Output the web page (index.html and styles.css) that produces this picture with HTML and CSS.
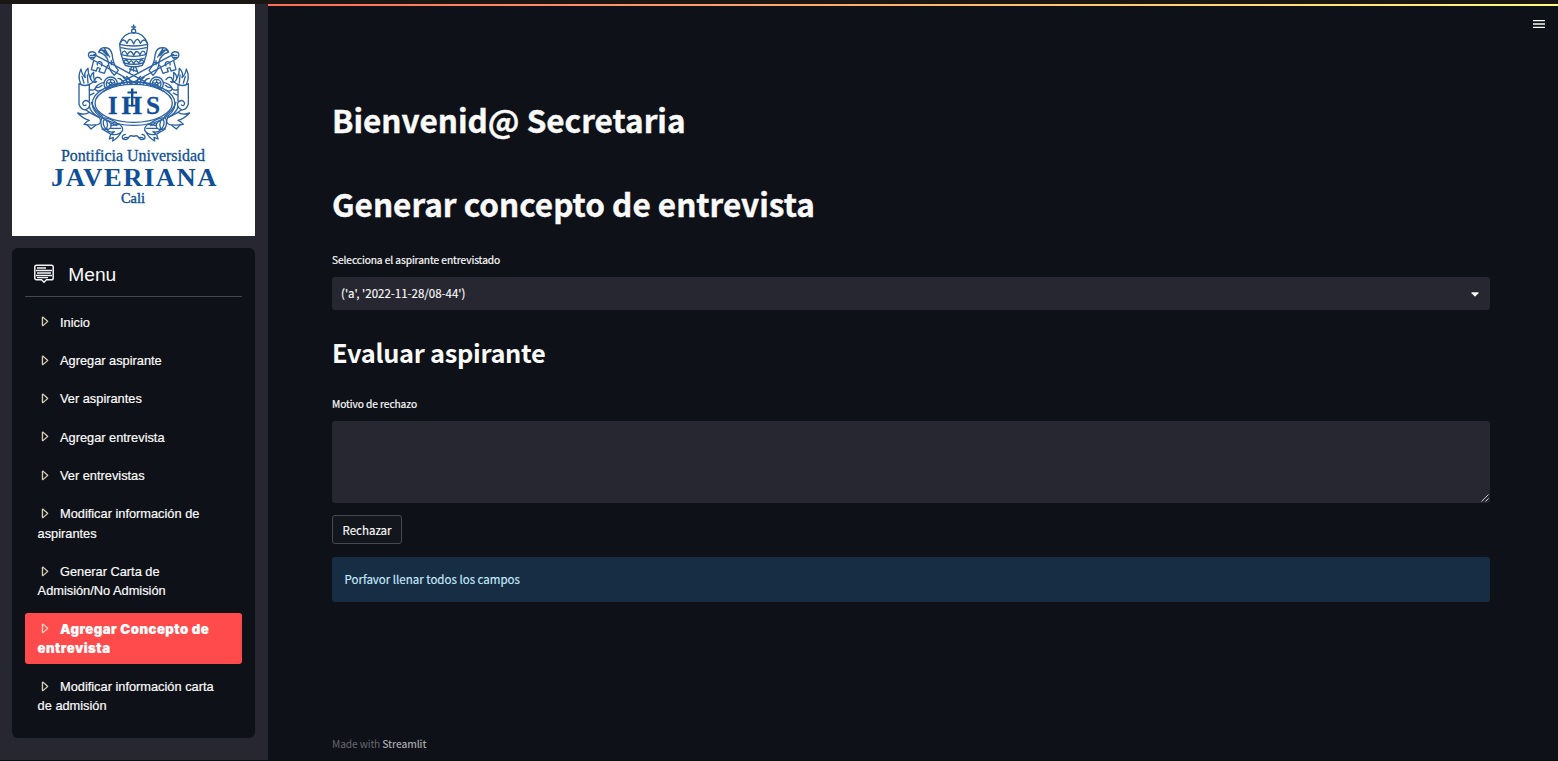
FILE: index.html
```html
<!DOCTYPE html>
<html lang="es">
<head>
<meta charset="utf-8">
<title>Generar concepto de entrevista</title>
<link rel="stylesheet" href="styles.css">
</head>
<body>
<svg class="defs" width="0" height="0">
  <symbol id="caret" viewBox="0 0 16 16"><path fill="currentColor" stroke="currentColor" stroke-width=".5" d="M6 12.796V3.204L11.481 8 6 12.796zm.659.753 5.48-4.796a1 1 0 0 0 0-1.506L6.66 2.451C6.011 1.885 5 2.345 5 3.204v9.592a1 1 0 0 0 1.659.753z"/></symbol>
</svg>
<div class="app">
  <aside class="sidebar">
    <div class="logo">
      <svg width="243" height="232" viewBox="0 0 243 232">
        <g transform="translate(48 11) scale(.33333)" fill="none" stroke="#2a62a3" stroke-width="4" stroke-linejoin="round" stroke-linecap="round">
          <!-- ribbons and flames, drawn once and mirrored -->
          <g id="side">
            <path d="M62 206 Q52 185 63 162 Q66 180 76 188 Q70 174 84 160 Q83 176 92 192 Q91 180 101 172 Q99 190 107 202"/>
            <path d="M57 206 V268 Q64 287 78 284 Q94 276 88 262 Q76 250 68 264 Q70 276 78 270 M57 206 Q72 216 88 208 V258"/>
            <path d="M88 208 Q102 202 108 188 Q118 184 124 194 M92 192 Q98 206 110 200 M66 184 L72 204 M82 180 L84 204"/>
            <path d="M53 294 Q75 302 88 292 Q103 300 119 308 Q127 324 113 329 Q92 332 72 328 Q80 318 88 316 Q70 312 53 294"/>
            <path d="M88 274 Q92 294 119 308 M94 262 Q103 288 128 304 M77 284 L88 292 M88 224 Q98 228 106 222 M90 240 Q96 238 102 234"/>
            <path d="M80 328 L93 342 L107 331 M128 308 Q150 309 170 324 Q190 332 188 346 Q178 362 154 358 L163 350 Q146 354 140 344 Q128 344 124 334 Q120 310 128 308"/>
            <path d="M132 314 Q152 318 154 332 Q150 348 136 340 Q126 326 132 314 M140 318 Q145 329 140 340 M152 332 L178 328 M150 340 L182 340 M155 324 L170 332"/>
            <path d="M152 358 L148 372 L160 367 L158 378 Q176 367 182 354 M126 342 L150 356 M196 358 Q184 360 188 371 Q200 379 208 365 Q212 360 221 364 M190 371 Q198 365 206 368"/>
            <circle cx="152" cy="206" r="20"/><circle cx="152" cy="206" r="13"/><circle cx="152" cy="206" r="4"/>
            <path d="M152 194v7M141 203l7 2M163 203l-7 2M145 216l5-6M159 216l-5-6"/>
            <path d="M131 203 Q113 205 105 221 Q110 233 124 225 M108 218 Q118 219 126 211 M170 216 Q182 211 187 200 Q184 190 174 190"/>
            <path d="M181 192 Q198 201 189 221 M190 187 Q207 197 200 217 M200 184 Q216 195 208 212"/>
            <!-- keys and infulae -->
            <path d="M102 118 L255 200 M94 132 L240 212 M87 126 Q82 114 92 111 Q104 108 108 117 Q106 132 94 132 Z M91 121 L105 121 M89 127 L102 127"/>
            <path d="M101 137 L94 164 L109 168 L112 158 L121 160 L117 170 L133 175 L143 151 M112 150 Q110 139 120 140 Q130 143 124 153"/>
            <path d="M116 111 Q122 94 142 99 Q156 103 158 130 Q161 150 175 166 L163 181 Q146 165 145 141 Q142 119 116 111 M116 111 Q127 96 141 115 M125 104 L143 122 M133 100 L149 126 M149 143 H160 M154 137 V149"/>
          </g>
          <use href="#side" transform="translate(442) scale(-1 1)"/>
          <!-- oval shield -->
          <ellipse cx="221" cy="265" rx="116" ry="57" fill="#fff"/>
          <ellipse cx="221" cy="266" rx="124" ry="65"/>
          <path d="M130 229 Q221 171 312 229"/>
          <!-- tiara -->
          <path d="M179 87 Q191 53 221 53 Q251 53 263 87 Q262 123 247 151 Q221 160 196 151 Q181 123 179 87Z" fill="#fff"/>
          <path d="M179 88 Q221 98 263 88 M183 98 Q221 108 259 98 M184 119 Q221 129 257 119 M190 130 Q221 138 252 130 M192 144 Q221 152 249 144 M181 83 Q190 66 201 85 Q210 60 221 87 Q232 60 241 85 Q252 66 261 83 M185 117 Q193 99 202 119 Q212 99 221 121 Q230 99 240 119 Q249 99 257 117 M190 142 Q197 127 207 144 Q214 130 221 146 Q228 130 236 144 Q245 127 252 142"/>
          <circle cx="221" cy="48" r="6"/><path d="M221 30V43M215 36H227M216 154L208 173M226 154L234 173M221 156V168M209 162L233 170"/>
        </g>
        <g fill="#0f4f97" stroke="#0f4f97" font-family="'Liberation Serif', serif">
          <g font-weight="bold" font-size="26" stroke-width=".3">
            <text x="96" y="109.500" textLength="9.500" lengthAdjust="spacingAndGlyphs">I</text>
            <text x="109.500" y="109.500" textLength="20.500" lengthAdjust="spacingAndGlyphs">H</text>
            <text x="134" y="109.500" textLength="14" lengthAdjust="spacingAndGlyphs">S</text>
          </g>
          <path stroke="none" d="M119 84.500h2.400v3h3.700v2h-3.700v13H119v-13H115.500v-2h3.500z"/>
          <text x="49" y="157" font-size="16.500" textLength="144" lengthAdjust="spacingAndGlyphs" stroke-width=".3">Pontificia Universidad</text>
          <text x="39" y="182" font-size="25.500" font-weight="bold" textLength="167" lengthAdjust="spacingAndGlyphs" stroke="none" letter-spacing="1.500">JAVERIANA</text>
          <text x="109" y="199" font-size="14" textLength="24" lengthAdjust="spacingAndGlyphs" stroke-width=".4">Cali</text>
        </g>
      </svg>
    </div>
    <nav class="menu">
      <div class="menu-head">
        <svg width="20" height="20" viewBox="0 0 20 20" fill="none" stroke="#f3f3f8">
          <path stroke-width="1.500" d="M2.500 1.200H17.500Q19.200 1.200 19.200 3V14Q19.200 15.800 17.500 15.800H12.500L10 18.200 7.500 15.800H2.500Q.8 15.800.8 14V3Q.8 1.200 2.500 1.200Z"/>
          <path stroke-width="1.300" d="M3 4H12M2 6.500H18M3 9H17M2 11.500H18M3 13.700H14"/>
        </svg>
        <span>Menu</span>
      </div>
      <ul>
        <li><svg class="caret"><use href="#caret"/></svg>Inicio</li>
        <li><svg class="caret"><use href="#caret"/></svg>Agregar aspirante</li>
        <li><svg class="caret"><use href="#caret"/></svg>Ver aspirantes</li>
        <li><svg class="caret"><use href="#caret"/></svg>Agregar entrevista</li>
        <li><svg class="caret"><use href="#caret"/></svg>Ver entrevistas</li>
        <li><svg class="caret"><use href="#caret"/></svg>Modificar información de aspirantes</li>
        <li><svg class="caret"><use href="#caret"/></svg>Generar Carta de Admisión/No Admisión</li>
        <li class="active"><svg class="caret"><use href="#caret"/></svg>Agregar Concepto de entrevista</li>
        <li><svg class="caret"><use href="#caret"/></svg>Modificar información carta de admisión</li>
      </ul>
    </nav>
  </aside>
  <main class="main">
    <div class="rainbow"></div>
    <header class="toolbar">
      <svg width="12" height="8" viewBox="0 0 12 8"><path fill="#fafafa" d="M0 0h12v1.300H0zM0 3.350h12v1.300H0zM0 6.700h12V8H0z"/></svg>
    </header>
    <div class="content">
      <h1 class="t1">Bienvenid@ Secretaria</h1>
      <h1 class="t2">Generar concepto de entrevista</h1>
      <label class="l1">Selecciona el aspirante entrevistado</label>
      <div class="select"><span>('a', '2022-11-28/08-44')</span>
        <svg width="8" height="5" viewBox="0 0 8 5"><path fill="#fafafa" d="M.9.300H7.100Q8 .5 7.400 1.200L4.500 4.300Q4 4.700 3.500 4.300L.6 1.200Q0 .5.9.300Z"/></svg>
      </div>
      <h2>Evaluar aspirante</h2>
      <label class="l2">Motivo de rechazo</label>
      <div class="textarea">
        <svg width="8" height="8" viewBox="0 0 8 8"><path stroke="#c8c8cc" stroke-width="1" d="M.5 7.500 7.500.5M4.500 7.500 7.500 4.500"/></svg>
      </div>
      <button>Rechazar</button>
      <div class="info">Porfavor llenar todos los campos</div>
    </div>
    <footer>Made with <b>Streamlit</b></footer>
  </main>
</div>
</body>
</html>
```

FILE: styles.css
```css
* { box-sizing: border-box; }
body {
  margin: 0;
  height: 761px;
  overflow: hidden;
  background: #0e1117;
  color: #fafafa;
  border-top: 4px solid #191613;
  font-family: "Noto Sans CJK SC", sans-serif;
}
.defs { position: absolute; }
.app { display: flex; height: 757px; border-bottom: 1px solid #0c0d12; }
.sidebar { width: 268px; flex: none; background: #262730; padding: 0 13px 0 12px; }
.logo { height: 232px; background: #fff; margin-bottom: 12px; }
.logo svg { display: block; }
.menu {
  height: 490px;
  background: #0e1117;
  border-radius: 6px;
  padding: 12.8px;
  font-family: "Liberation Sans", Arial, sans-serif;
}
.menu-head {
  display: flex;
  align-items: center;
  height: 36px;
  padding: 0 9px 8px;
  border-bottom: 1px solid #45474c;
  font-size: 19.2px;
}
.menu-head span { margin: 2px 0 0 14.500px; }
.menu ul { list-style: none; margin: 9.350px 0 0; padding: 0; }
.menu li {
  padding: 6.400px 12.800px;
  margin-bottom: 6.400px;
  border-radius: 3px;
  font-size: 12.800px;
  line-height: 19.200px;
  -webkit-text-stroke: .2px currentColor;
}
.caret { width: 12.800px; height: 12.800px; margin-right: 9.600px; vertical-align: -1.500px; color: #f4e6cb; }
.menu .active {
  background: #ff4b4b;
  font-family: Inter, "Liberation Sans", sans-serif;
  font-weight: 900;
  font-size: 13.200px;
  letter-spacing: .48px;
  color: #fff;
}
.main { flex: 1; display: flex; flex-direction: column; }
.rainbow { height: 2px; background: linear-gradient(90deg, #ff6c5c, #fffd80); }
.toolbar { height: 72px; display: flex; justify-content: flex-end; padding: 14px 13px 0 0; }
.content { width: 1222px; padding: 0 0 0 64px; display: flex; flex-direction: column; }
h1, h2 { margin: 0; white-space: nowrap; }
h1 { font-size: 31.500px; line-height: 44px; font-weight: 700; -webkit-text-stroke: .4px currentColor; }
.t1 { margin-top: 19px; }
.t2 { margin-top: 40px; }
label { font-size: 10.200px; line-height: 16px; letter-spacing: -.08px; -webkit-text-stroke: .2px currentColor; }
.l1 { margin-top: 27px; }
.select {
  height: 33px;
  margin-top: 9px;
  padding: 0 11px 1px 9px;
  display: flex;
  align-items: center;
  justify-content: space-between;
  background: #262730;
  border-radius: 3px;
  font-size: 11.500px;
}
.select svg { margin-top: 2px; }
h2 { font-size: 25.400px; line-height: 36px; font-weight: 600; letter-spacing: -.3px; margin-top: 24px; }
.l2 { margin-top: 26px; }
.textarea {
  height: 82px;
  margin-top: 9px;
  padding: 0 1px 1px 0;
  display: flex;
  align-items: flex-end;
  justify-content: flex-end;
  background: #262730;
  border-radius: 3px;
}
button {
  align-self: flex-start;
  width: 70px;
  height: 29px;
  margin-top: 12px;
  padding: 0;
  background: #13171d;
  border: 1px solid #464951;
  border-radius: 3px;
  color: #fafafa;
  font: 11.500px "Noto Sans CJK SC", sans-serif;
}
.select, button, .info { -webkit-text-stroke: .15px currentColor; }
.info {
  height: 45px;
  margin-top: 13px;
  padding: 0 12.500px;
  line-height: 44px;
  background: #172d43;
  border-radius: 3px;
  color: #c7ebff;
  font-size: 11.500px;
}
footer { margin-top: 134px; padding-left: 64px; font-size: 10.200px; line-height: 16px; letter-spacing: -.12px; color: #66686e; }
footer b { font-weight: 500; color: #a3a4a8; }
```
